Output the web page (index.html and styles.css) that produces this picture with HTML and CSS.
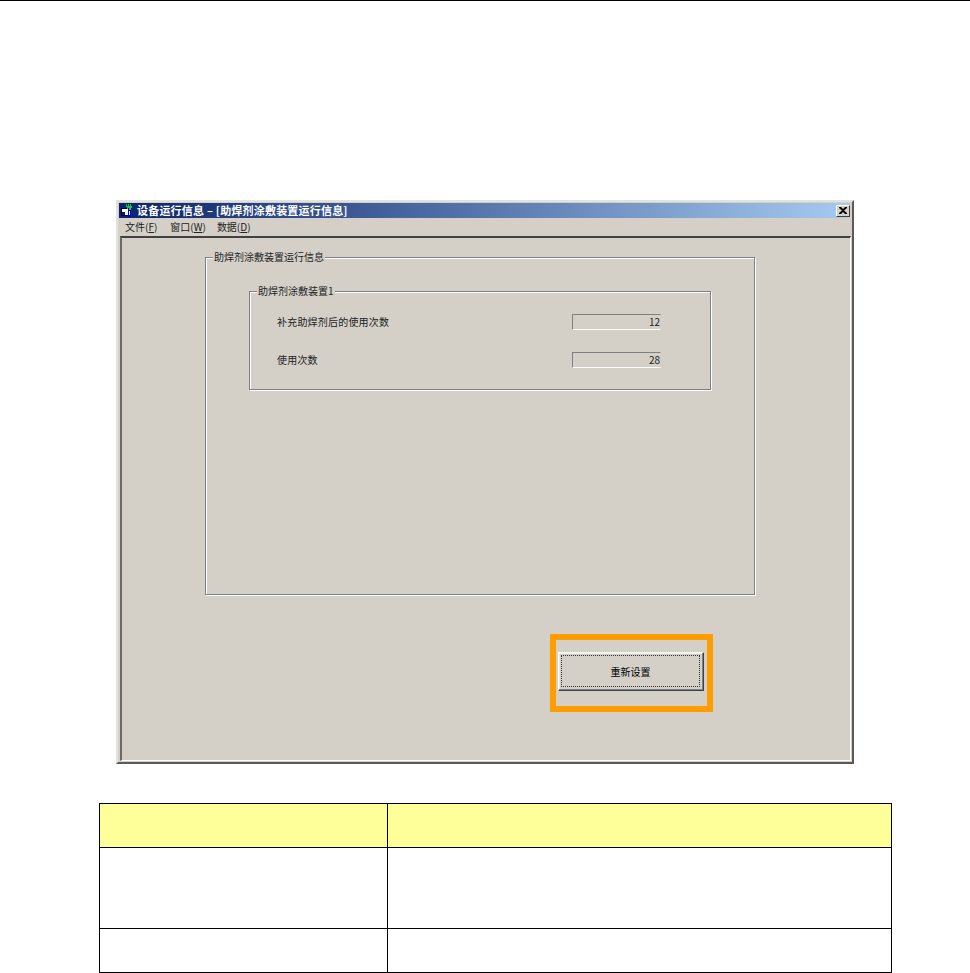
FILE: index.html
```html
<!DOCTYPE html>
<html lang="zh">
<head>
<meta charset="utf-8">
<title>设备运行信息</title>
<link rel="stylesheet" href="styles.css">
</head>
<body>
<div class="page">
  <section class="window">
    <header class="titlebar">
      <svg class="app-icon" width="16" height="15" viewBox="0 0 16 15" aria-hidden="true">
        <rect x="2" y="5" width="8" height="8" fill="#000050"/>
        <rect x="3" y="6" width="6" height="6" fill="#fff"/>
        <rect x="3" y="9" width="3" height="3" fill="#101080"/>
        <rect x="9" y="7" width="3" height="7" fill="#0000e0"/>
        <rect x="10" y="8" width="1" height="4" fill="#fff"/>
        <path d="M7 1h1v2h1V1h1v2h1V1h1v2h1v2h-1v2h-2V5H9v1H8V4H7z" fill="#20c040"/>
      </svg>
      <span class="title-text">设备运行信息 – [助焊剂涂敷装置运行信息]</span>
      <button class="close" aria-label="关闭">
        <svg width="8" height="7" viewBox="0 0 8 7" aria-hidden="true"><path d="M0 0h2l2 2 2-2h2v1L5 3.500 8 6v1H6L4 5 2 7H0V6l3-2.500L0 1z" fill="#000"/></svg>
      </button>
    </header>
    <nav class="menubar">
      <span class="menu m1">文件(<u>F</u>)</span>
      <span class="menu m2">窗口(<u>W</u>)</span>
      <span class="menu m3">数据(<u>D</u>)</span>
    </nav>
    <div class="client">
      <div class="group outer-group">
        <span class="caption">助焊剂涂敷装置运行信息</span>
        <div class="group inner-group">
          <span class="caption">助焊剂涂敷装置1</span>
          <div class="row"><span class="label">补充助焊剂后的使用次数</span><output class="field">12</output></div>
          <div class="row"><span class="label">使用次数</span><output class="field">28</output></div>
        </div>
      </div>
      <div class="highlight"><button class="reset"><span class="focus">重新设置</span></button></div>
    </div>
  </section>
  <table class="notes">
    <colgroup><col class="col-a"><col></colgroup>
    <tr class="head"><th></th><th></th></tr>
    <tr class="tall"><td></td><td></td></tr>
    <tr class="short"><td></td><td></td></tr>
  </table>
</div>
</body>
</html>
```
FILE: styles.css
```css
* { box-sizing: border-box; }
html, body { margin: 0; padding: 0; background: #fff; }
body { height: 973px; overflow: hidden; font-family: "Noto Sans CJK SC", "Liberation Sans", sans-serif; }
.page { border-top: 1px solid #000; padding-top: 199px; }

.window {
  width: 738px; height: 564px; margin-left: 116px;
  background: #d4d0c8;
  border: 2px solid; border-color: #e4e2dc #5a5a5a #5a5a5a #e4e2dc;
  display: flex; flex-direction: column;
  color: #222; font-size: 10px;
}
.titlebar {
  height: 15px; margin: 1px 2px 0 1px; flex: none;
  background: linear-gradient(90deg, #0a246a, #a6caf0);
  display: flex; align-items: center; color: #fff;
}
.app-icon { flex: none; margin-right: 2px; }
.title-text { font-size: 11px; font-weight: 700; letter-spacing: .2px; white-space: pre; line-height: 15px; }
.close {
  margin-left: auto; margin-right: 0; padding: 0; width: 14px; height: 12px;
  background: #d4d0c8; display: flex; align-items: center; justify-content: center;
  border: 1px solid; border-color: #fff #404040 #404040 #fff;
}
.menubar { height: 18px; flex: none; display: flex; align-items: center; line-height: 18px; }
.menu { white-space: nowrap; }
.m1 { margin-left: 7px; }
.m2 { margin-left: 13px; }
.m3 { margin-left: 11px; }
.client {
  flex: 1; margin: 0 1px 1px 2px; padding: 19px 0 0 83px;
  border: solid; border-width: 2px 1px 1px 2px; border-color: #404040 #fff #fff #6a6a6a;
}
.group { position: relative; border: 1px solid #808080; box-shadow: inset 1px 1px #fff, 1px 1px #fff; }
.caption {
  position: absolute; top: -8px; left: 7px; padding: 0 1px;
  background: #d4d0c8; font-size: 10px; line-height: 14px; white-space: nowrap;
}
.outer-group { width: 550px; height: 338px; padding: 33px 0 0 43px; }
.inner-group { width: 462px; height: 99px; padding: 22px 49px 0 27px; display: flex; flex-direction: column; gap: 22px; }
.row { height: 16px; display: flex; justify-content: space-between; align-items: center; }
.label { letter-spacing: .2px; margin-top: -2px; }
.field {
  width: 89px; height: 16px; padding-right: 0; text-align: right; line-height: 14px;
  border: 1px solid; border-color: #808080 #d4d0c8 #fff #808080;
}
.highlight { margin: 39px 0 0 345px; width: 163px; height: 78px; border: 6px solid #ff9c00; padding: 12px 0 0 2px; }
.reset {
  display: block; width: 146px; height: 39px; padding: 2px 3px 3px 2px; background: #d4d0c8;
  border: 1px solid; border-color: #fff #404040 #404040 #fff;
  box-shadow: inset -1px -1px #808080, inset 1px 1px #eeeae4;
  font: 10px "Noto Sans CJK SC", sans-serif; color: #000;
}
.focus { display: flex; align-items: center; justify-content: center; height: 100%; border: 1px dotted #333; }

.notes { width: 793px; margin: 39px 0 0 99px; border-collapse: collapse; table-layout: fixed; }
.notes th, .notes td { border: 1px solid #000; padding: 0; }
.col-a { width: 288px; }
.head th { background: #ffff99; height: 44px; }
.tall td { height: 81px; }
.short td { height: 44px; }
```
